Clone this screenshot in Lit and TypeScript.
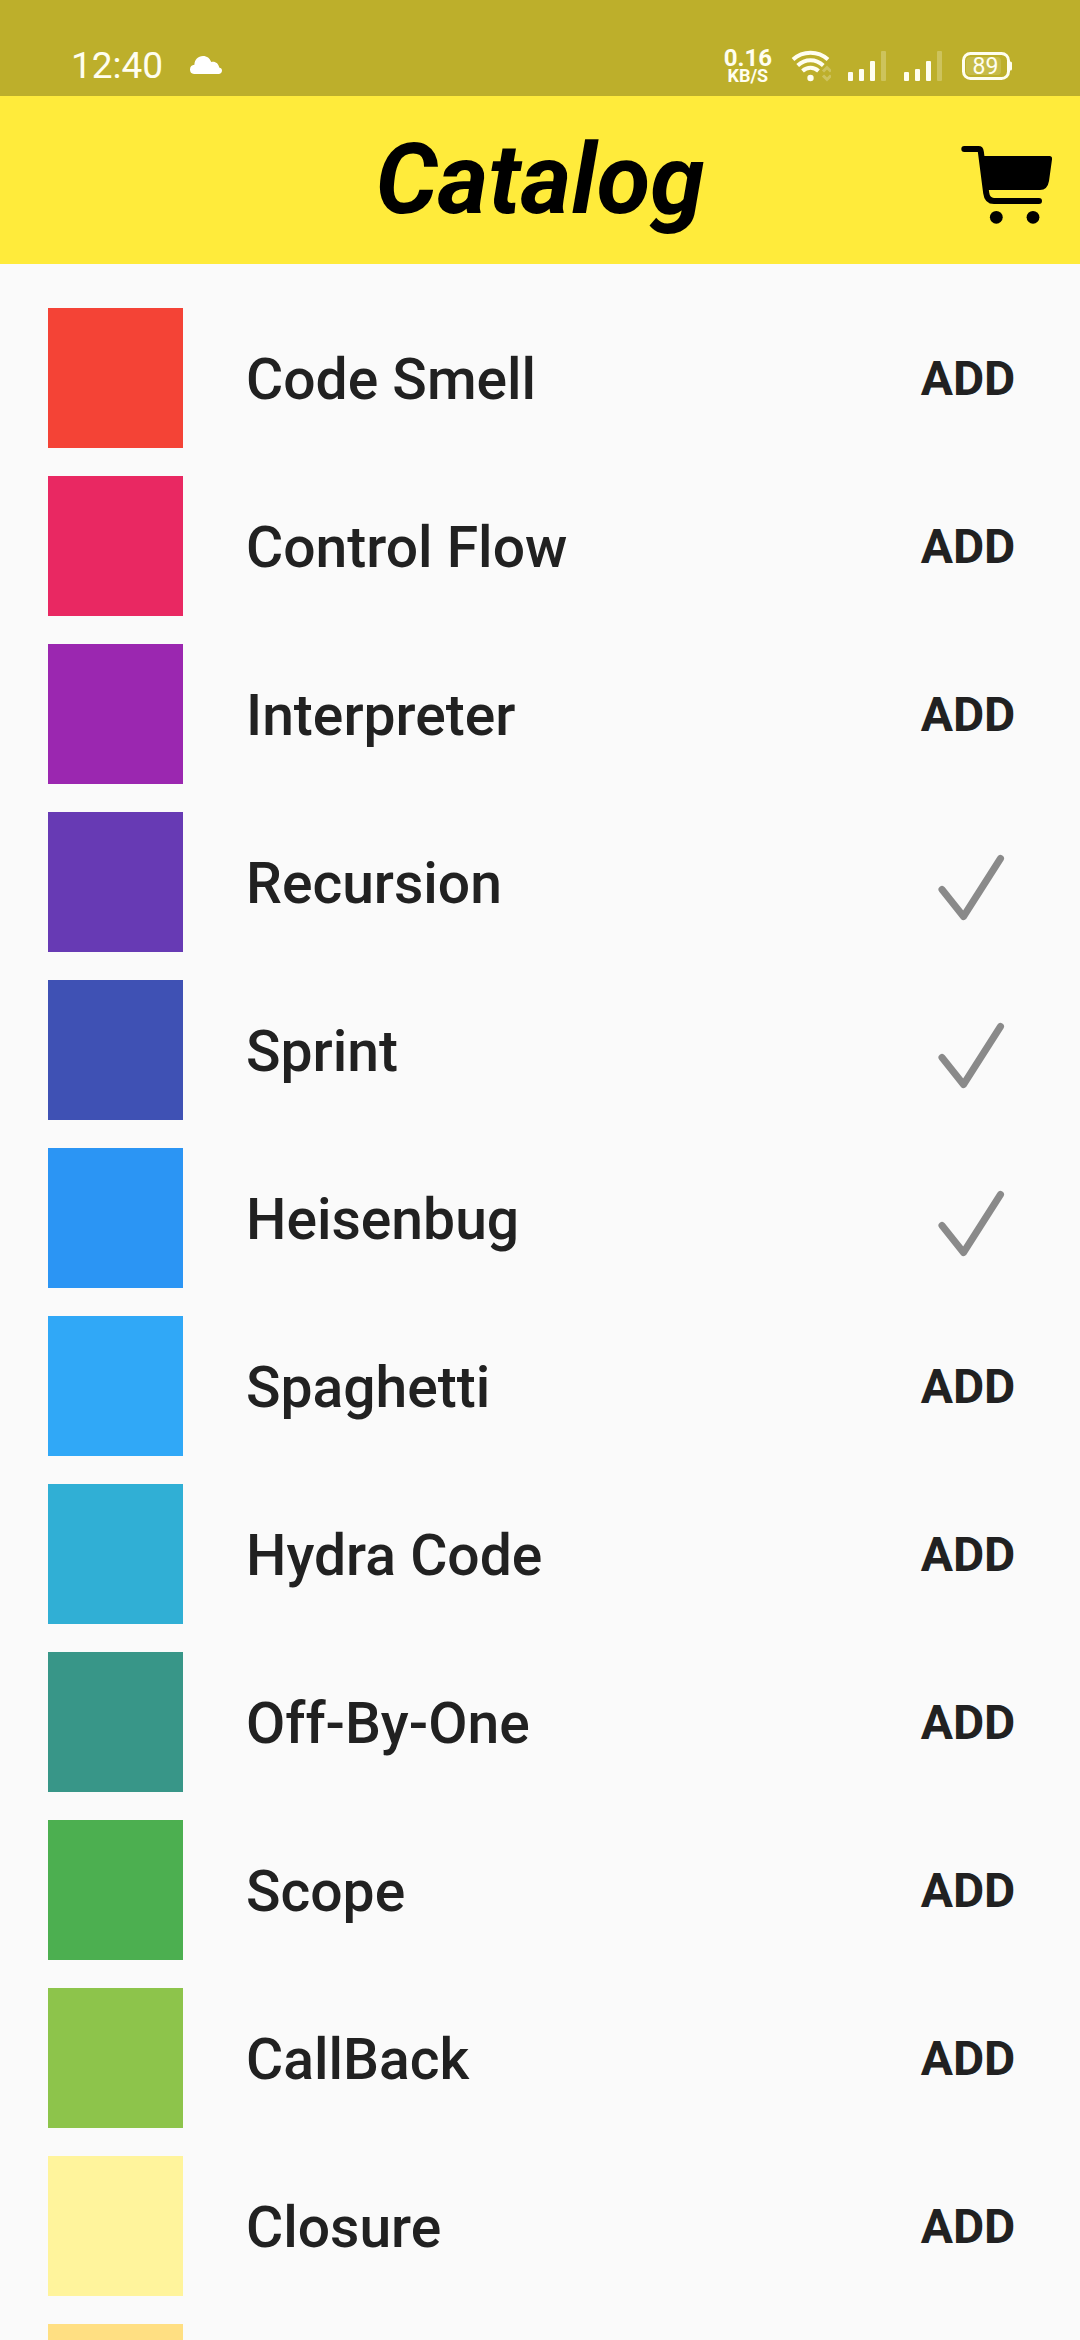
import { LitElement, html, css, nothing } from "lit";
import { customElement, property, state } from "lit/decorators.js";

interface Item {
  color: string;
  name?: string;
  inCart?: boolean;
}

@customElement("status-bar")
class StatusBar extends LitElement {
  static styles = css`
    :host {
      display: flex;
      justify-content: space-between;
      align-items: flex-end;
      box-sizing: border-box;
      height: 96px;
      padding: 0 68px 10px 71px;
      background: #bdaf2b;
      color: #fffef0;
      font-family: Roboto, "Liberation Sans", sans-serif;
    }
    .side {
      display: flex;
      align-items: center;
      height: 40px;
    }
    .left {
      gap: 26px;
    }
    .time {
      font-size: 37px;
      line-height: 40px;
    }
    .rate {
      display: flex;
      flex-direction: column;
      align-items: center;
      font-weight: 700;
      margin-right: 19px;
    }
    .value {
      font-size: 24px;
      line-height: 20px;
    }
    .unit {
      font-size: 18px;
      line-height: 16px;
    }
    .signal {
      margin-left: 16px;
    }
    .battery {
      margin-left: 18px;
    }
    svg {
      display: block;
    }
    .level {
      font-size: 23px;
    }
  `;

  private signal() {
    return html`<svg class="signal" width="40" height="32" viewBox="0 0 40 32" fill="currentColor" aria-hidden="true">
      <rect x="1" y="22" width="5" height="9" rx="1" />
      <rect x="12" y="19" width="5" height="12" rx="1" />
      <rect x="23" y="11" width="5" height="20" rx="1" />
      <rect x="34" y="1" width="5" height="30" rx="1" opacity="0.25" />
    </svg>`;
  }

  render() {
    return html`
      <div class="side left">
        <span class="time">12:40</span>
        <svg width="34" height="22" viewBox="0 0 34 22" fill="#fff" aria-hidden="true">
          <path d="M5 19a4.600 4.600 0 0 1-4-4.600c0-2.700 1.800-4.600 4.400-4.700C5.600 4.700 9 1 14 1c3.900 0 7 2.300 8.200 6 4.300-.8 7.400 1.600 8 5.600 1.800.3 2.800 1.500 2.800 3 0 2-1.500 3.400-3.400 3.400z" />
        </svg>
      </div>
      <div class="side">
        <div class="rate">
          <span class="value">0.16</span>
          <span class="unit">KB/S</span>
        </div>
        <svg width="40" height="32" viewBox="0 0 40 32" fill="none" stroke="currentColor" stroke-width="4" aria-hidden="true">
          <path d="M2 9.500C12 .5 27 .5 37 9.500" />
          <path d="M6.700 15.500c7.500-7 18-7 25.600 0" />
          <path d="M11.500 21c4.800-4.300 11.200-4.300 16 0" />
          <circle cx="19.500" cy="28" r="3.200" fill="currentColor" stroke="none" />
          <g stroke-width="3" opacity="0.25">
            <path d="M32 21.500l4-4 4 4" />
            <path d="M32 25.500l4 4 4-4" />
          </g>
        </svg>
        ${this.signal()}${this.signal()}
        <svg class="battery" width="51" height="30" viewBox="0 0 51 30" aria-hidden="true">
          <rect x="2.500" y="2.500" width="45" height="25" rx="7" fill="none" stroke="currentColor" stroke-width="3" />
          <rect x="5" y="6" width="35" height="18" rx="4" fill="currentColor" opacity="0.15" />
          <path d="M48 10.500h1.500q1.500 0 1.500 1.500v6q0 1.500-1.500 1.500H48z" fill="currentColor" />
          <text class="level" x="24.500" y="23" text-anchor="middle" fill="currentColor">89</text>
        </svg>
      </div>
    `;
  }
}

@customElement("catalog-row")
class CatalogRow extends LitElement {
  @property({ attribute: false }) item!: Item;

  static styles = css`
    :host {
      display: flex;
      align-items: center;
      color: #212121;
    }
    .swatch {
      flex: none;
      width: 135px;
      height: 140px;
    }
    .name {
      flex: 1;
      margin-left: 63px;
      padding-top: 4px;
      font-size: 57px;
      font-weight: 500;
      line-height: 68px;
    }
    .action {
      display: flex;
      align-items: center;
      justify-content: center;
      width: 176px;
      height: 100px;
      padding: 2px 0 0;
      border: 0;
      background: none;
      color: inherit;
      font: inherit;
      font-size: 48px;
      font-weight: 700;
      line-height: 56px;
    }
  `;

  private add() {
    this.dispatchEvent(new CustomEvent("add-item", { detail: this.item.name, bubbles: true, composed: true }));
  }

  private check() {
    return html`<svg width="74" height="76" viewBox="0 0 74 76" fill="none" stroke="#8a8a8a" stroke-width="7" stroke-linecap="round" stroke-linejoin="round" aria-hidden="true">
      <path d="M11 44.500L32.500 71.500L69.500 13.500" />
    </svg>`;
  }

  render() {
    const { name, color, inCart } = this.item;
    return html`
      <div class="swatch" style="background:${color}"></div>
      ${name
        ? html`<span class="name">${name}</span>
            <button class="action" ?disabled=${inCart} aria-label=${inCart ? `${name} added` : `Add ${name}`} @click=${this.add}>
              ${inCart ? this.check() : "ADD"}
            </button>`
        : nothing}
    `;
  }
}

@customElement("app-root")
class AppRoot extends LitElement {
  @state() private items: Item[] = [
    { name: "Code Smell", color: "#f44336" },
    { name: "Control Flow", color: "#e92862" },
    { name: "Interpreter", color: "#9b27b0" },
    { name: "Recursion", color: "#673ab4", inCart: true },
    { name: "Sprint", color: "#3f51b4", inCart: true },
    { name: "Heisenbug", color: "#2b95f4", inCart: true },
    { name: "Spaghetti", color: "#30a8f7" },
    { name: "Hydra Code", color: "#30afd5" },
    { name: "Off-By-One", color: "#389688" },
    { name: "Scope", color: "#4caf50" },
    { name: "CallBack", color: "#8dc44b" },
    { name: "Closure", color: "#fff49c" },
    { color: "#ffdf82" },
  ];

  static styles = css`
    :host {
      display: flex;
      flex-direction: column;
      height: 100vh;
      overflow: hidden;
      background: #fafafa;
      font-family: Roboto, "Liberation Sans", sans-serif;
    }
    status-bar,
    .bar {
      flex: none;
    }
    .bar {
      display: grid;
      grid-template-columns: 1fr auto 1fr;
      align-items: center;
      height: 168px;
      padding: 0 22px;
      background: #ffeb3b;
      color: #000;
    }
    .title {
      grid-column: 2;
      margin: 0;
      font-size: 98px;
      font-style: italic;
      font-weight: 700;
      line-height: 116px;
    }
    .cart {
      justify-self: end;
      padding: 0;
      border: 0;
      background: none;
      color: inherit;
    }
    .cart svg {
      display: block;
    }
    .list {
      display: flex;
      flex: 1;
      flex-direction: column;
      gap: 28px;
      min-height: 0;
      margin: 0;
      padding: 44px 24px 0 48px;
      overflow: hidden;
      list-style: none;
    }
    .entry {
      flex: none;
    }
  `;

  private onAdd(event: CustomEvent<string>) {
    this.items = this.items.map((item) => (item.name === event.detail ? { ...item, inCart: true } : item));
  }

  render() {
    return html`
      <status-bar></status-bar>
      <header class="bar">
        <h1 class="title">Catalog</h1>
        <button class="cart" aria-label="Cart">
          <svg width="100" height="88" viewBox="0 0 100 88" aria-hidden="true">
            <path
              d="M6.300 13H20.500Q22.500 13 22.800 15.500L28.200 57Q29.200 65 36 65H81"
              fill="none"
              stroke="currentColor"
              stroke-width="6"
              stroke-linecap="round"
              stroke-linejoin="round"
            />
            <path d="M25 20H91.500Q94.500 20 94 23.500L91 45Q89.500 54 82 54H29z" fill="currentColor" />
            <circle cx="38.300" cy="81.300" r="6.400" fill="currentColor" />
            <circle cx="75" cy="81.300" r="6.400" fill="currentColor" />
          </svg>
        </button>
      </header>
      <ul class="list" @add-item=${this.onAdd}>
        ${this.items.map((item) => html`<li class="entry"><catalog-row .item=${item}></catalog-row></li>`)}
      </ul>
    `;
  }
}
